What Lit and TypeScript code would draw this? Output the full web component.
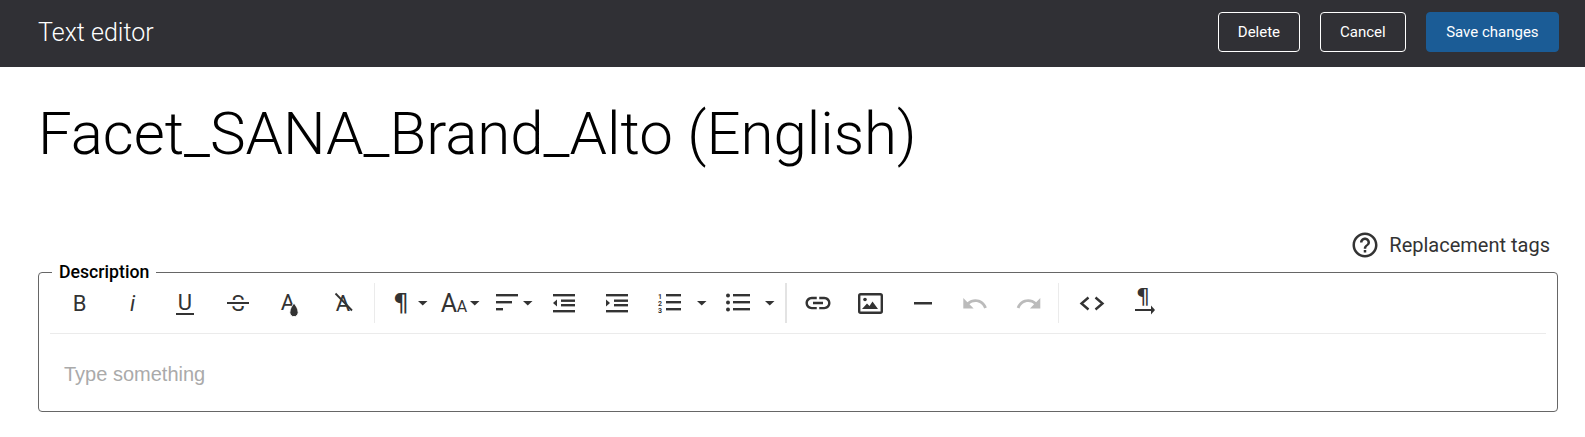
import { LitElement, html, css, svg } from "lit";
import { customElement } from "lit/decorators.js";

const letter = (x: number, y: number, t: string, size = 21, weight = 400, extra = "") =>
  svg`<text x=${x} y=${y} text-anchor="middle" font-size=${size} font-weight=${weight} font-style=${extra}>${t}</text>`;
const pilcrow = (x: number, y: number, size: number) =>
  svg`<text class="pil" x=${x} y=${y} text-anchor="middle" font-size=${size}>¶</text>`;
const bar = (x: number, y: number, w: number, h = 2.4) => svg`<rect x=${x} y=${y} width=${w} height=${h}></rect>`;
const caret = (x: number) => svg`<polygon points="${x},301 ${x + 9.5},301 ${x + 4.75},305.5"></polygon>`;

type Tool = { start: number; end: number; body: unknown; off?: boolean } | { sep: string };

const tools: Tool[] = [
  { start: 53, end: 106, body: letter(79.5, 311, "B", 22) },
  { start: 106, end: 159, body: letter(132.5, 311, "i", 22, 400, "italic") },
  { start: 159, end: 212, body: svg`${letter(185, 310, "U", 22)}${bar(176, 313, 18, 2)}` },
  {
    start: 212,
    end: 265,
    body: svg`${letter(238, 311, "S", 22)}<rect class="blank" x="227" y="300" width="22" height="6"></rect>${bar(227, 302, 22, 2)}`,
  },
  {
    start: 265,
    end: 318,
    body: svg`${letter(288, 310, "A", 22)}<path d="M294 303c2 3 4.2 5.5 4.2 9.5a4.2 4.2 0 0 1-8.4 0c0-4 2.2-6.5 4.2-9.5z" class="ring"></path>`,
  },
  {
    start: 318,
    end: 371,
    body: svg`${letter(343, 311, "A", 22)}<path d="M335.5 293.5 352 310.5" class="cut"></path>`,
  },
  { sep: "thin" },
  { start: 378, end: 432, body: svg`${pilcrow(401, 311, 25)}${caret(418)}` },
  {
    start: 432,
    end: 486,
    body: svg`${letter(449, 312, "A", 25)}${letter(462, 312, "A", 16)}${caret(470)}`,
  },
  {
    start: 486,
    end: 540,
    body: svg`${bar(496, 294, 22)}${bar(496, 301, 16)}${bar(496, 308, 7)}${caret(523)}`,
  },
  {
    start: 540,
    end: 593,
    body: svg`${bar(553, 294, 22)}${bar(561, 299.5, 14)}${bar(561, 304, 14)}${bar(553, 310, 22)}<polygon points="557,299.5 557,306.5 553,303"></polygon>`,
  },
  {
    start: 593,
    end: 646,
    body: svg`${bar(606, 294, 22)}${bar(614, 299.5, 14)}${bar(614, 304, 14)}${bar(606, 310, 22)}<polygon points="606,299.5 606,306.5 610,303"></polygon>`,
  },
  {
    start: 646,
    end: 716,
    body: svg`${letter(660, 298.5, "1", 7, 700)}${letter(660, 305.5, "2", 7, 700)}${letter(660, 312.5, "3", 7, 700)}${bar(666, 294, 15)}${bar(666, 301, 15)}${bar(666, 308, 15)}${caret(697)}`,
  },
  {
    start: 716,
    end: 784,
    body: svg`<circle cx="728" cy="295.5" r="2"></circle><circle cx="728" cy="302.5" r="2"></circle><circle cx="728" cy="309.5" r="2"></circle>${bar(733, 294, 17)}${bar(733, 301, 17)}${bar(733, 308, 17)}${caret(765)}`,
  },
  { sep: "wide" },
  {
    start: 792,
    end: 845,
    body: svg`<g transform="translate(803 288) scale(1.25)"><path d="M3.9 12c0-1.71 1.39-3.1 3.1-3.1h4V7H7c-2.76 0-5 2.24-5 5s2.24 5 5 5h4v-1.9H7c-1.71 0-3.1-1.39-3.1-3.1zM8 13h8v-2H8v2zm9-6h-4v1.9h4c1.71 0 3.1 1.39 3.1 3.1s-1.39 3.1-3.1 3.1h-4V17h4c2.76 0 5-2.24 5-5s-2.24-5-5-5z"></path></g>`,
  },
  {
    start: 845,
    end: 898,
    body: svg`<rect class="line" x="859.2" y="294.2" width="22.6" height="18.6" rx="1.5"></rect><circle cx="865" cy="299.5" r="1.8"></circle><polygon points="862,309 867,303.5 869.5,306 872.5,301.5 878,309"></polygon>`,
  },
  { start: 898, end: 951, body: bar(914, 302, 18, 2.5) },
  {
    start: 951,
    end: 1004,
    off: true,
    body: svg`<g transform="translate(961 290) scale(1.15)"><path d="M12.5 8c-2.65 0-5.05.99-6.9 2.6L2 7v9h9l-3.62-3.62c1.39-1.16 3.16-1.88 5.12-1.88 3.54 0 6.55 2.31 7.6 5.5l2.37-.78C21.08 11.03 17.15 8 12.5 8z"></path></g>`,
  },
  {
    start: 1004,
    end: 1057,
    off: true,
    body: svg`<g transform="translate(1015 290) scale(1.15)"><path d="M18.4 10.6C16.55 8.99 14.15 8 11.5 8c-4.65 0-8.58 3.03-9.96 7.22L3.9 16c1.05-3.19 4.05-5.5 7.6-5.5 1.95 0 3.73.72 5.12 1.88L13 16h9V7l-3.6 3.6z"></path></g>`,
  },
  { sep: "last" },
  {
    start: 1065,
    end: 1118,
    body: svg`<path class="stroke" d="M1088.5 297.5 1081.5 303.5 1088.5 309.5M1095.5 297.5 1102.5 303.5 1095.5 309.5"></path>`,
  },
  {
    start: 1118,
    end: 1171,
    body: svg`${pilcrow(1143, 304, 22)}${bar(1135, 309, 18, 2)}<polygon points="1151,305.5 1155,310 1151,314.5"></polygon>`,
  },
];

@customElement("app-root")
export class AppRoot extends LitElement {
  static styles = css`
    :host {
      display: block;
      font-family: Roboto, sans-serif;
      background: #fff;
      color: #000;
    }
    .bar {
      height: 67px;
      background: #303035;
      display: flex;
      align-items: center;
      justify-content: space-between;
      padding: 0 26px 3px 38px;
      box-sizing: border-box;
    }
    .bar-title {
      color: #fff;
      font-size: 25px;
      font-weight: 300;
    }
    .actions {
      display: flex;
      gap: 20px;
    }
    button {
      height: 40px;
      border-radius: 4px;
      font: 450 15px Roboto, sans-serif;
      color: #fff;
      background: transparent;
      border: 1px solid #fff;
      padding: 0 19px;
      box-sizing: border-box;
    }
    button.primary {
      background: #1b5c96;
      border-color: #1b5c96;
      padding: 0 19.4px;
    }
    h1 {
      margin: 0;
      padding: 32px 38px 0;
      font-size: 60px;
      font-weight: 300;
      letter-spacing: -0.03px;
      line-height: 70px;
      height: 131px;
      box-sizing: content-box;
    }
    .tags {
      display: flex;
      justify-content: flex-end;
      align-items: center;
      gap: 9px;
      padding-right: 35px;
      height: 30px;
      font-size: 20px;
      color: #333;
      margin-bottom: 3px;
    }
    .tags svg {
      width: 30px;
      height: 30px;
      fill: #333;
    }
    fieldset {
      margin: 0 27px 0 38px;
      padding: 1px 11px 0;
      border: 1px solid #666;
      border-radius: 4px;
      min-width: 0;
    }
    legend {
      margin-left: 2px;
      padding: 0 7px;
      font-size: 17.7px;
      font-weight: 500;
      line-height: 19px;
    }
    .toolbar {
      display: flex;
      align-items: center;
      height: 40px;
      margin-left: 3px;
      margin-bottom: 10px;
    }
    .tool {
      display: block;
      height: 40px;
      fill: #333;
      font-family: Roboto, sans-serif;
    }
    .tool.off {
      fill: #bbb;
    }
    .pil {
      font-family: "DejaVu Sans", sans-serif;
    }
    .blank {
      fill: #fff;
    }
    .ring {
      stroke: #fff;
      stroke-width: 1;
    }
    .cut {
      stroke: #333;
      stroke-width: 1.8;
      fill: none;
    }
    .line {
      fill: none;
      stroke: #333;
      stroke-width: 2.4;
    }
    .stroke {
      fill: none;
      stroke: #333;
      stroke-width: 2.4;
    }
    .sep {
      height: 40px;
      width: 1px;
      background: #ebebeb;
      margin: 0 3px;
    }
    .sep.wide {
      width: 2px;
      margin: 0 5px 0 1px;
      background: #e3e3e3;
    }
    .sep.last {
      margin: 0 6px 0 1px;
    }
    .content {
      border-top: 1px solid #ebebeb;
      padding: 4px 14px 0;
      height: 73px;
      display: flex;
      align-items: center;
      font: 20px "Liberation Sans", Arial, sans-serif;
      color: #aaa;
    }
  `;

  render() {
    return html`
      <div class="bar">
        <div class="bar-title">Text editor</div>
        <div class="actions">
          <button>Delete</button>
          <button>Cancel</button>
          <button class="primary">Save changes</button>
        </div>
      </div>
      <h1>Facet_SANA_Brand_Alto (English)</h1>
      <div class="tags">
        <svg viewBox="0 0 24 24">
          <path
            d="M11 18h2v-2h-2v2zm1-16C6.48 2 2 6.48 2 12s4.48 10 10 10 10-4.48 10-10S17.52 2 12 2zm0 18c-4.41 0-8-3.59-8-8s3.59-8 8-8 8 3.59 8 8-3.59 8-8 8zm0-14c-2.21 0-4 1.79-4 4h2c0-1.1.9-2 2-2s2 .9 2 2c0 2-3 1.75-3 5h2c0-2.25 3-2.5 3-5 0-2.21-1.79-4-4-4z"
          ></path>
        </svg>
        <span>Replacement tags</span>
      </div>
      <fieldset>
        <legend>Description</legend>
        <div class="toolbar">
          ${tools.map((t) =>
            "sep" in t
              ? html`<div class="sep ${t.sep}"></div>`
              : html`<svg
                  class="tool ${t.off ? "off" : ""}"
                  width=${t.end - t.start}
                  height="40"
                  viewBox="${t.start} 283 ${t.end - t.start} 40"
                >
                  ${t.body}
                </svg>`
          )}
        </div>
        <div class="content">Type something</div>
      </fieldset>
    `;
  }
}
